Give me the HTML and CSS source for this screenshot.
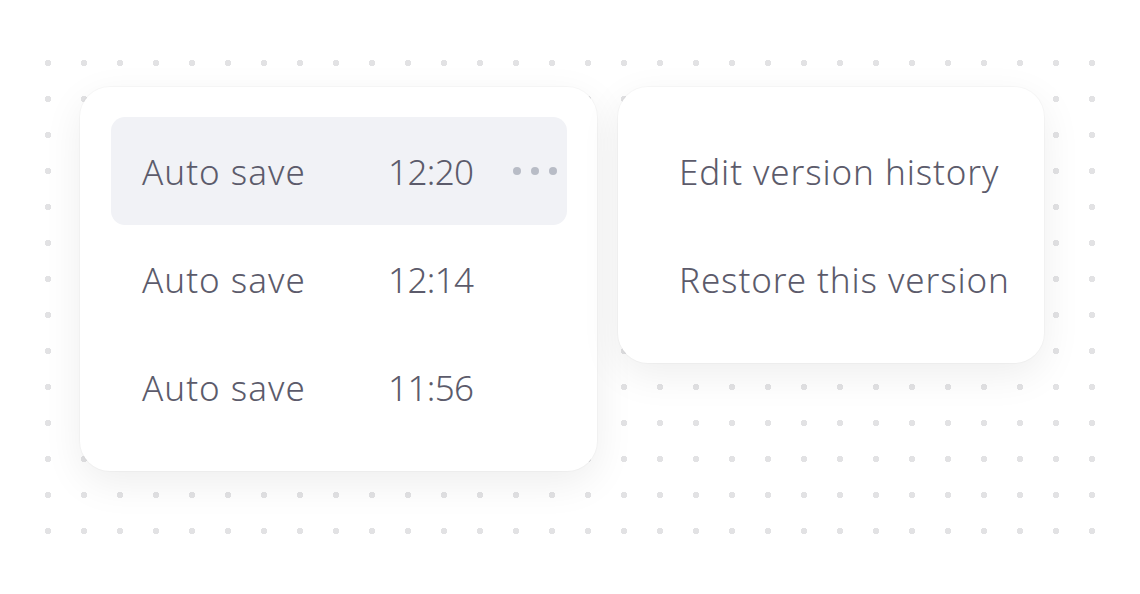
FILE: index.html
```html
<!DOCTYPE html>
<html lang="en">
<head>
    <meta charset="UTF-8">
    <meta name="viewport" content="width=device-width, initial-scale=1.0">
    <title>Version History</title>
    <link rel="stylesheet" href="styles.css">
</head>
<body>
    <!-- Dotted canvas -->
    <div class="canvas">

        <!-- Version list -->
        <div class="card versions">
            <div class="version active">
                <span class="label">Auto save</span>
                <span class="time">12:20</span>
                <span class="more"><i></i><i></i><i></i></span>
            </div>
            <div class="version">
                <span class="label">Auto save</span>
                <span class="time">12:14</span>
            </div>
            <div class="version">
                <span class="label">Auto save</span>
                <span class="time">11:56</span>
            </div>
        </div>

        <!-- Context menu -->
        <div class="card menu">
            <div class="menu-item">Edit version history</div>
            <div class="menu-item">Restore this version</div>
        </div>

    </div>
</body>
</html>
```

FILE: styles.css
```css
body {
    margin: 0;
    background: #fff;
    font-family: 'Noto Sans', 'Liberation Sans', sans-serif;
    font-weight: 300;
    color: #5c5b6b;
}

/* Dotted canvas */
.canvas {
    margin: 45px 0 0 30px;
    width: 1080px;
    height: 504px;
    box-sizing: border-box;
    padding: 42px 0 0 50px;
    display: flex;
    align-items: flex-start;
    gap: 21px;
    background-image: radial-gradient(circle, #e2e2e4 3px, transparent 3.5px);
    background-size: 36px 36px;
}

.card {
    background: #fff;
    border-radius: 30px;
    padding: 30px;
    box-shadow: 0 0 0 1px rgba(0, 0, 0, 0.025), 0 12px 40px rgba(0, 0, 0, 0.07);
    display: flex;
    flex-direction: column;
}

/* Version list */
.versions {
    width: 517px;
    box-sizing: border-box;
    padding: 30px 30px 30px 31px;
}

.version {
    height: 108px;
    display: flex;
    align-items: center;
    padding: 0 10px 0 31px;
    border-radius: 14px;
    font-size: 35px;
    letter-spacing: 1px;
}

.version.active {
    background: #f1f2f6;
}

.version .label {
    width: 246px;
}

.version .time {
    flex: 1;
    letter-spacing: -0.6px;
}

.more {
    display: flex;
    gap: 10px;
}

.more i {
    width: 8px;
    height: 8px;
    border-radius: 50%;
    background: #b8bcc6;
}

/* Context menu */
.menu {
    width: 426px;
    box-sizing: border-box;
}

.menu-item {
    height: 108px;
    display: flex;
    align-items: center;
    padding-left: 31px;
    font-size: 35px;
    letter-spacing: 0.9px;
}
```
